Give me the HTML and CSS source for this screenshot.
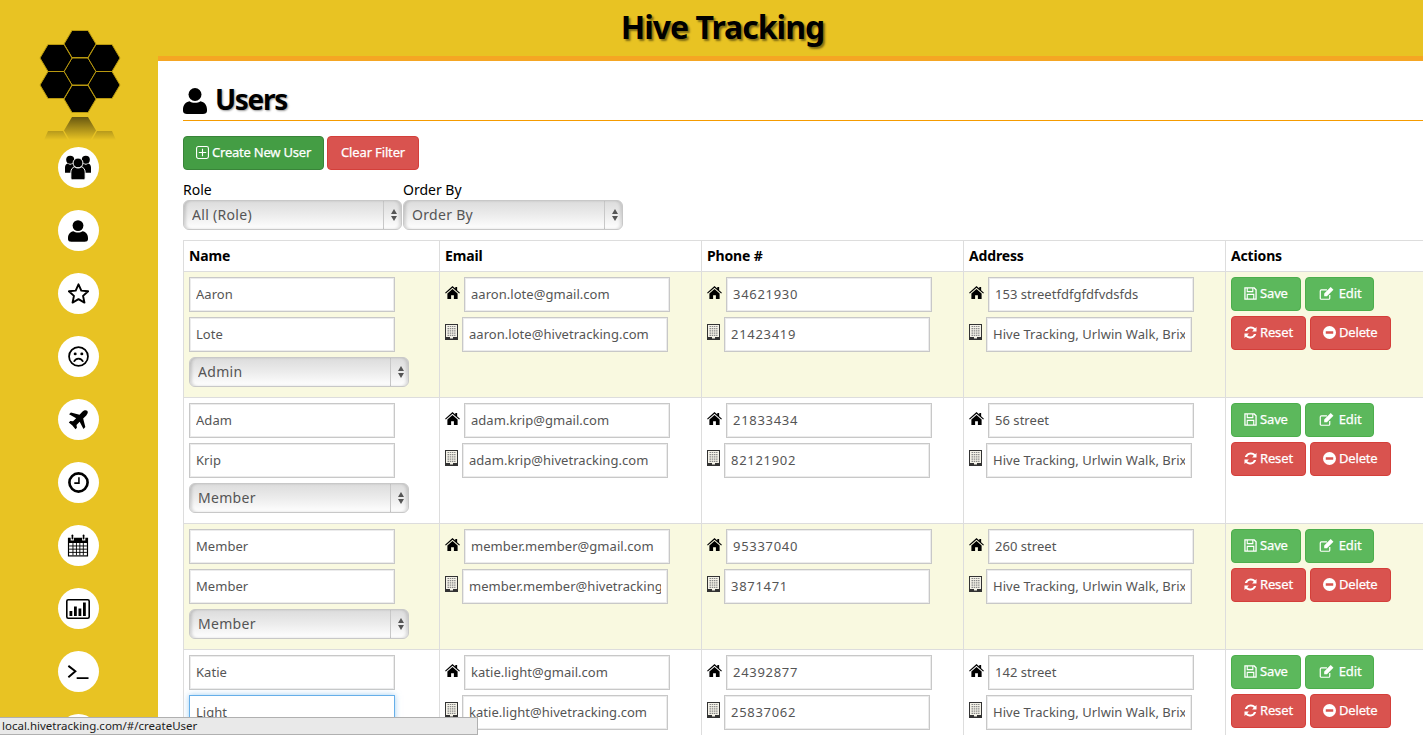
FILE: index.html
```html
<!DOCTYPE html>
<html lang="en">
<head>
  <meta charset="UTF-8" />
  <title>Hive Tracking</title>
  <link rel="stylesheet" href="styles.css">
</head>
<body>

  <svg class="defs" width="0" height="0">
    <symbol id="i-user" viewBox="0 0 24 26"><circle cx="12" cy="6.500" r="6.500"/><path d="M0 21.500c0-4.500 2.500-7.500 6.500-8.300 1.500 1 3.400 1.600 5.500 1.600s4-.6 5.500-1.600c4 .8 6.500 3.800 6.500 8.300V23c0 2-1.700 3-4 3H4c-2.300 0-4-1-4-3z"/></symbol>
    <symbol id="i-users" viewBox="0 0 40 38"><circle cx="8" cy="7" r="6.200"/><circle cx="32" cy="7" r="6.200"/><path d="M0 27v-8c0-3.500 2-5.500 4-6 1 1 2.500 1.600 4 1.600s3-.6 4-1.600c1.500.3 3 1 4 2.500-3 2-5 5-5 9v2.500z"/><path d="M40 27v-8c0-3.500-2-5.500-4-6-1 1-2.500 1.600-4 1.600s-3-.6-4-1.600c-1.500.3-3 1-4 2.500 3 2 5 5 5 9v2.500z"/><circle cx="20" cy="12" r="7.600" stroke="#fff" stroke-width="1.500"/><path d="M9 35v-9c0-4.500 3-7.500 6-8 1.400 1.200 3 1.800 5 1.800s3.600-.6 5-1.800c3 .5 6 3.500 6 8v9c0 2-1.500 3-3 3H12c-1.500 0-3-1-3-3z" stroke="#fff" stroke-width="1.500"/></symbol>
    <symbol id="i-star" viewBox="0 0 24 24"><path d="M12 1.500l3.200 7.200 7.800.8-5.800 5.200 1.600 7.700-6.800-4-6.800 4 1.600-7.700L1 9.500l7.800-.8z" fill="none" stroke="currentColor" stroke-width="2.200" stroke-linejoin="round"/></symbol>
    <symbol id="i-frown" viewBox="0 0 24 24"><circle cx="12" cy="12" r="10.800" fill="none" stroke="currentColor" stroke-width="2"/><circle cx="8.200" cy="9" r="1.700"/><circle cx="15.800" cy="9" r="1.700"/><path d="M6.800 18c1-2.500 3-3.700 5.200-3.700s4.200 1.200 5.200 3.700" fill="none" stroke="currentColor" stroke-width="2"/></symbol>
    <symbol id="i-plane" viewBox="0 0 24 24"><path d="M23 1c-1.400-1.400-3.800-.8-5.500.9l-3.700 3.700L3.500 3 1.300 5.200l8.500 4.600-3.800 3.800-3.300-.5L1 15l4.300 3.700L9 23l1.700-1.700-.5-3.300 3.800-3.800 4.600 8.500 2.200-2.200-2.600-10.300 3.700-3.700C23.600 4.800 24.400 2.400 23 1z"/></symbol>
    <symbol id="i-clock" viewBox="0 0 24 24"><circle cx="12" cy="12" r="10.400" fill="none" stroke="currentColor" stroke-width="3"/><path d="M11.600 6h1.800v7.600H7.200v-1.800h4.400z"/></symbol>
    <symbol id="i-calendar" viewBox="0 0 24 24"><path d="M1 3.500h3v3h3.500v-3h9v3H20v-3h3V24H1z"/><rect x="5" y="0" width="1.800" height="5.500" rx=".9"/><rect x="17.200" y="0" width="1.800" height="5.500" rx=".9"/><path d="M2.300 9.300h19.400v13.400H2.300z" fill="#fff"/><path d="M2.300 12.500h19.400M2.300 16h19.400M2.300 19.500h19.400M6.500 9.300v13.400M10.300 9.300v13.400M14 9.300v13.400M17.800 9.300v13.400" stroke="currentColor" stroke-width="1" fill="none"/></symbol>
    <symbol id="i-chart" viewBox="0 0 24 20"><rect x=".8" y=".8" width="22.400" height="18.400" rx="1.500" fill="none" stroke="currentColor" stroke-width="1.600"/><rect x="3.500" y="12" width="2.800" height="5"/><rect x="8" y="7.500" width="2.800" height="9.500"/><rect x="12.500" y="9.500" width="2.800" height="7.500"/><rect x="17" y="3.500" width="2.800" height="13.500"/></symbol>
    <symbol id="i-term" viewBox="0 0 24 16"><path d="M1 1l8 6.200-8 6.800" fill="none" stroke="currentColor" stroke-width="2.200"/><rect x="10.500" y="14" width="13.500" height="2"/></symbol>
    <symbol id="i-home" viewBox="0 0 16 14"><path d="M8 0l3 2.700V1h2v3.500L16 7.200l-.8.900L8 1.800.8 8.100 0 7.200z"/><path d="M8 3.300l5.500 4.800V14H9.500v-4h-3v4h-4V8.100z"/></symbol>
    <symbol id="i-building" viewBox="0 0 13 16"><rect x=".5" y=".5" width="12" height="15" fill="#f4f2e8" stroke="#333"/><path d="M2.500 2.500h8M2.500 4.700h8M2.500 6.900h8M2.500 9.100h8M2.500 11.300h8" stroke="#888" stroke-width="1.200" stroke-dasharray="1.500 .7"/><rect x="1" y="13" width="11" height="2.500" fill="#333"/><rect x="5" y="12.500" width="3" height="2" fill="#f4f2e8"/></symbol>
    <symbol id="i-plus" viewBox="0 0 14 14"><rect x=".6" y=".6" width="12.800" height="12.800" rx="2" fill="none" stroke="currentColor" stroke-width="1.200"/><path d="M7 3v8M3 7h8" stroke="currentColor" stroke-width="1.200"/></symbol>
    <symbol id="i-save" viewBox="0 0 14 14"><path d="M1 1h10l2 2v10H1z" fill="none" stroke="currentColor" stroke-width="1.400"/><path d="M3.500 1v4h6V1M3.500 13V8h7v5" fill="none" stroke="currentColor" stroke-width="1.200"/></symbol>
    <symbol id="i-edit" viewBox="0 0 15 14"><path d="M11 8.500V12a1.200 1.200 0 0 1-1.200 1.200H2A1.200 1.200 0 0 1 .8 12V4.200A1.200 1.200 0 0 1 2 3h6" fill="none" stroke="currentColor" stroke-width="1.300"/><path d="M5 7l7-7 3 3-7 7H5z"/></symbol>
    <symbol id="i-reset" viewBox="0 0 14 14"><path d="M13.500 1v4.800H8.700l1.800-1.800A4.300 4.300 0 0 0 3.300 5.500H.9A6.700 6.700 0 0 1 12 2.500z"/><path d="M.5 13V8.200h4.800l-1.800 1.800a4.300 4.300 0 0 0 7.200-1.500h2.400A6.700 6.700 0 0 1 2 11.500z"/></symbol>
    <symbol id="i-minus" viewBox="0 0 14 14"><path fill-rule="evenodd" d="M7 0a7 7 0 1 1 0 14A7 7 0 0 1 7 0zM3 5.700v2.600h8V5.700z"/></symbol>
  </svg>

  <aside class="sidebar">
    <!-- viewBox is page pixels, so the cells can be read off the screenshot -->
    <svg class="logo" viewBox="0 30 156 117" width="156" height="117">
      <defs>
        <polygon id="hex" points="-16,0 -8,-13.500 8,-13.500 16,0 8,13.500 -8,13.500" stroke="#b8980f" stroke-width="1"/>
        <linearGradient id="fade" gradientUnits="userSpaceOnUse" x1="0" y1="117" x2="0" y2="140">
          <stop offset="0" stop-color="#000" stop-opacity=".55"/>
          <stop offset="1" stop-color="#000" stop-opacity="0"/>
        </linearGradient>
      </defs>
      <use href="#hex" x="80" y="44"/>
      <use href="#hex" x="80" y="71.500"/>
      <use href="#hex" x="80" y="99"/>
      <use href="#hex" x="56" y="58"/>
      <use href="#hex" x="104" y="58"/>
      <use href="#hex" x="56" y="85"/>
      <use href="#hex" x="104" y="85"/>
      <path fill="url(#fade)" d="M72 117h16l8 13.500-8 13.500H72l-8-13.500zM48 131h15l5 9H44zM97 131h15l4 9H92z"/>
    </svg>
    <a class="nav-btn"><svg class="nav-icon ni-users"><use href="#i-users"/></svg></a>
    <a class="nav-btn"><svg class="nav-icon ni-user"><use href="#i-user"/></svg></a>
    <a class="nav-btn"><svg class="nav-icon"><use href="#i-star"/></svg></a>
    <a class="nav-btn"><svg class="nav-icon"><use href="#i-frown"/></svg></a>
    <a class="nav-btn"><svg class="nav-icon ni-plane"><use href="#i-plane"/></svg></a>
    <a class="nav-btn"><svg class="nav-icon"><use href="#i-clock"/></svg></a>
    <a class="nav-btn"><svg class="nav-icon ni-calendar"><use href="#i-calendar"/></svg></a>
    <a class="nav-btn"><svg class="nav-icon ni-chart"><use href="#i-chart"/></svg></a>
    <a class="nav-btn"><svg class="nav-icon ni-term"><use href="#i-term"/></svg></a>
    <a class="nav-btn"></a>
  </aside>

  <div class="page">
    <header class="topbar">
      <h1>Hive Tracking</h1>
    </header>

    <main class="content">
      <h2 class="page-title"><svg class="title-icon"><use href="#i-user"/></svg>Users</h2>

      <div class="toolbar">
        <button class="btn btn-create"><svg class="btn-icon"><use href="#i-plus"/></svg>Create New User</button>
        <button class="btn btn-red btn-clear">Clear Filter</button>
      </div>

      <div class="filters">
        <div class="filter">
          <label>Role</label>
          <div class="select-wrap"><select><option>All (Role)</option></select></div>
        </div>
        <div class="filter">
          <label>Order By</label>
          <div class="select-wrap"><select><option>Order By</option></select></div>
        </div>
      </div>

      <table class="users">
        <colgroup>
          <col class="col-name"><col class="col-email"><col class="col-phone"><col class="col-address"><col class="col-actions">
        </colgroup>
        <thead>
          <tr><th>Name</th><th>Email</th><th>Phone #</th><th>Address</th><th>Actions</th></tr>
        </thead>
        <tbody>
          <tr class="odd">
            <td>
              <input class="field" value="Aaron">
              <input class="field" value="Lote">
              <div class="select-wrap role"><select><option>Admin</option></select></div>
            </td>
            <td>
              <div class="line"><svg class="ico-home"><use href="#i-home"/></svg><input class="field" value="aaron.lote@gmail.com"></div>
              <div class="line"><svg class="ico-work"><use href="#i-building"/></svg><input class="field" value="aaron.lote@hivetracking.com"></div>
            </td>
            <td>
              <div class="line"><svg class="ico-home"><use href="#i-home"/></svg><input class="field num" value="34621930"></div>
              <div class="line"><svg class="ico-work"><use href="#i-building"/></svg><input class="field num" value="21423419"></div>
            </td>
            <td>
              <div class="line"><svg class="ico-home"><use href="#i-home"/></svg><input class="field" value="153 streetfdfgfdfvdsfds"></div>
              <div class="line"><svg class="ico-work"><use href="#i-building"/></svg><input class="field" value="Hive Tracking, Urlwin Walk, Brixton, London"></div>
            </td>
            <td>
              <div class="actions">
                <button class="btn btn-green"><svg class="btn-icon"><use href="#i-save"/></svg>Save</button>
                <button class="btn btn-green"><svg class="btn-icon ic-edit"><use href="#i-edit"/></svg>Edit</button>
              </div>
              <div class="actions">
                <button class="btn btn-red"><svg class="btn-icon"><use href="#i-reset"/></svg>Reset</button>
                <button class="btn btn-red"><svg class="btn-icon"><use href="#i-minus"/></svg>Delete</button>
              </div>
            </td>
          </tr>
          <tr>
            <td>
              <input class="field" value="Adam">
              <input class="field" value="Krip">
              <div class="select-wrap role"><select><option>Member</option></select></div>
            </td>
            <td>
              <div class="line"><svg class="ico-home"><use href="#i-home"/></svg><input class="field" value="adam.krip@gmail.com"></div>
              <div class="line"><svg class="ico-work"><use href="#i-building"/></svg><input class="field" value="adam.krip@hivetracking.com"></div>
            </td>
            <td>
              <div class="line"><svg class="ico-home"><use href="#i-home"/></svg><input class="field num" value="21833434"></div>
              <div class="line"><svg class="ico-work"><use href="#i-building"/></svg><input class="field num" value="82121902"></div>
            </td>
            <td>
              <div class="line"><svg class="ico-home"><use href="#i-home"/></svg><input class="field" value="56 street"></div>
              <div class="line"><svg class="ico-work"><use href="#i-building"/></svg><input class="field" value="Hive Tracking, Urlwin Walk, Brixton, London"></div>
            </td>
            <td>
              <div class="actions">
                <button class="btn btn-green"><svg class="btn-icon"><use href="#i-save"/></svg>Save</button>
                <button class="btn btn-green"><svg class="btn-icon ic-edit"><use href="#i-edit"/></svg>Edit</button>
              </div>
              <div class="actions">
                <button class="btn btn-red"><svg class="btn-icon"><use href="#i-reset"/></svg>Reset</button>
                <button class="btn btn-red"><svg class="btn-icon"><use href="#i-minus"/></svg>Delete</button>
              </div>
            </td>
          </tr>
          <tr class="odd">
            <td>
              <input class="field" value="Member">
              <input class="field" value="Member">
              <div class="select-wrap role"><select><option>Member</option></select></div>
            </td>
            <td>
              <div class="line"><svg class="ico-home"><use href="#i-home"/></svg><input class="field" value="member.member@gmail.com"></div>
              <div class="line"><svg class="ico-work"><use href="#i-building"/></svg><input class="field" value="member.member@hivetracking.com"></div>
            </td>
            <td>
              <div class="line"><svg class="ico-home"><use href="#i-home"/></svg><input class="field num" value="95337040"></div>
              <div class="line"><svg class="ico-work"><use href="#i-building"/></svg><input class="field num" value="3871471"></div>
            </td>
            <td>
              <div class="line"><svg class="ico-home"><use href="#i-home"/></svg><input class="field" value="260 street"></div>
              <div class="line"><svg class="ico-work"><use href="#i-building"/></svg><input class="field" value="Hive Tracking, Urlwin Walk, Brixton, London"></div>
            </td>
            <td>
              <div class="actions">
                <button class="btn btn-green"><svg class="btn-icon"><use href="#i-save"/></svg>Save</button>
                <button class="btn btn-green"><svg class="btn-icon ic-edit"><use href="#i-edit"/></svg>Edit</button>
              </div>
              <div class="actions">
                <button class="btn btn-red"><svg class="btn-icon"><use href="#i-reset"/></svg>Reset</button>
                <button class="btn btn-red"><svg class="btn-icon"><use href="#i-minus"/></svg>Delete</button>
              </div>
            </td>
          </tr>
          <tr>
            <td>
              <input class="field" value="Katie">
              <input class="field focused" value="Light">
            </td>
            <td>
              <div class="line"><svg class="ico-home"><use href="#i-home"/></svg><input class="field" value="katie.light@gmail.com"></div>
              <div class="line"><svg class="ico-work"><use href="#i-building"/></svg><input class="field" value="katie.light@hivetracking.com"></div>
            </td>
            <td>
              <div class="line"><svg class="ico-home"><use href="#i-home"/></svg><input class="field num" value="24392877"></div>
              <div class="line"><svg class="ico-work"><use href="#i-building"/></svg><input class="field num" value="25837062"></div>
            </td>
            <td>
              <div class="line"><svg class="ico-home"><use href="#i-home"/></svg><input class="field" value="142 street"></div>
              <div class="line"><svg class="ico-work"><use href="#i-building"/></svg><input class="field" value="Hive Tracking, Urlwin Walk, Brixton, London"></div>
            </td>
            <td>
              <div class="actions">
                <button class="btn btn-green"><svg class="btn-icon"><use href="#i-save"/></svg>Save</button>
                <button class="btn btn-green"><svg class="btn-icon ic-edit"><use href="#i-edit"/></svg>Edit</button>
              </div>
              <div class="actions">
                <button class="btn btn-red"><svg class="btn-icon"><use href="#i-reset"/></svg>Reset</button>
                <button class="btn btn-red"><svg class="btn-icon"><use href="#i-minus"/></svg>Delete</button>
              </div>
            </td>
          </tr>
        </tbody>
      </table>
    </main>
  </div>

  <div class="status">local.hivetracking.com/#/createUser</div>

</body>
</html>
```

FILE: styles.css
```css
* {
  box-sizing: border-box;
}

body {
  margin: 0;
  height: 735px;
  overflow: hidden;
  display: flex;
  background-color: #e8c323;
  font-family: "Noto Sans", Arial, sans-serif;
  font-size: 14px;
  color: #000;
}

.defs {
  position: absolute;
}

.sidebar {
  width: 158px;
  flex-shrink: 0;
  height: 735px;
  overflow: hidden;
  display: flex;
  flex-direction: column;
  align-items: center;
  padding: 30px 2px 0 0;
}

.logo {
  flex-shrink: 0;
}

.nav-btn {
  flex-shrink: 0;
  width: 41px;
  height: 41px;
  margin-bottom: 22px;
  border-radius: 50%;
  background-color: #fff;
  color: #000;
  display: flex;
  align-items: center;
  justify-content: center;
}

.nav-icon {
  width: 21px;
  height: 21px;
  fill: currentColor;
}

.ni-users { width: 26px; height: 25px; }
.ni-user { width: 20px; height: 22px; }
.ni-plane { width: 20px; height: 20px; }
.ni-calendar { width: 22px; height: 23px; }
.ni-chart { width: 24px; height: 20px; }
.ni-term { width: 22px; height: 14px; }

.page {
  flex: 1;
  min-width: 0;
  height: 735px;
  display: flex;
  flex-direction: column;
}

.topbar {
  height: 56px;
  flex-shrink: 0;
  text-align: center;
  padding-right: 136px;
}

.topbar h1 {
  margin: 0;
  font-size: 32px;
  letter-spacing: -1px;
  line-height: 54px;
  font-weight: bold;
  text-shadow: 2px 2px 2px rgba(0, 0, 0, 0.45);
}

.content {
  flex: 1;
  min-height: 0;
  overflow: hidden;
  background-color: #fff;
  border-top: 5px solid #f5a623;
  padding: 18px 0 0 25px;
}

.page-title {
  margin: 0 0 15px;
  height: 42px;
  border-bottom: 1px solid #f59b00;
  font-size: 28px;
  letter-spacing: -1.3px;
  line-height: 40px;
  font-weight: bold;
  text-shadow: 1px 1px 2px rgba(0, 0, 0, 0.4);
}

.title-icon {
  width: 24px;
  height: 26px;
  margin-right: 8px;
  vertical-align: -4px;
  fill: #000;
}

.toolbar {
  display: flex;
  gap: 3px;
  margin-bottom: 11px;
}

.btn {
  height: 34px;
  padding: 0 12px 2px;
  border: 1px solid transparent;
  border-radius: 4px;
  color: #fff;
  font-family: inherit;
  font-size: 13px;
  letter-spacing: -0.15px;
  -webkit-text-stroke: 0.25px #fff;
  cursor: pointer;
  white-space: nowrap;
}

.btn-clear {
  padding: 0 13px 2px;
}

.btn-create {
  background-color: #449d44;
  border-color: #398439;
  letter-spacing: -0.22px;
}

.btn-green {
  background-color: #5cb85c;
  border-color: #4cae4c;
}

.btn-red {
  background-color: #d9534f;
  border-color: #d43f3a;
}

.btn-icon {
  width: 13px;
  height: 13px;
  margin-right: 3px;
  vertical-align: -2px;
  fill: currentColor;
}

.btn-icon.ic-edit {
  width: 15px;
  margin: 0 5px 0 1px;
}

.filters {
  display: flex;
  gap: 1px;
  margin-bottom: 10px;
}

.filter {
  width: 220px;
}

.filter:first-child {
  width: 219px;
}

.filter label {
  display: block;
  line-height: 18px;
  height: 19px;
  font-size: 14px;
}

.select-wrap {
  position: relative;
  height: 30px;
}

.select-wrap select {
  width: 100%;
  height: 100%;
  appearance: none;
  -webkit-appearance: none;
  padding: 0 8px 2px;
  border: 1px solid #c8c8c8;
  border-radius: 6px;
  background-color: #ececec;
  background-image:
    linear-gradient(#c8c8c8, #c8c8c8),
    linear-gradient(to bottom, #dcdcdc, #ececec 50%, #fbfbfb 90%);
  background-repeat: no-repeat;
  background-size: 1px 100%, 100% 100%;
  background-position: right 17px top, left top;
  box-shadow: inset 3px 0 3px -1px rgba(0, 0, 0, 0.15), inset -3px 0 3px -1px rgba(0, 0, 0, 0.12);
  color: #555;
  font-family: inherit;
  font-size: 14px;
  letter-spacing: 0.3px;
}

/* the up and down arrows on the right of the select */
.select-wrap::before,
.select-wrap::after {
  content: "";
  position: absolute;
  right: 5px;
  border-left: 3.5px solid transparent;
  border-right: 3.5px solid transparent;
}

.select-wrap::before {
  top: 9px;
  border-bottom: 5px solid #555;
}

.select-wrap::after {
  top: 16px;
  border-top: 5px solid #555;
}

.users {
  width: 1240px;
  table-layout: fixed;
  border-collapse: collapse;
}

.col-name { width: 256px; }
.col-email { width: 262px; }
.col-phone { width: 262px; }
.col-address { width: 262px; }
.col-actions { width: 198px; }

.users th, .users td {
  border: 1px solid #ddd;
  text-align: left;
  vertical-align: top;
  padding: 5px;
}

.users th {
  height: 31px;
  font-size: 14px;
  letter-spacing: -0.15px;
  font-weight: bold;
}

.users td {
  height: 126px;
}

.users tr.odd td {
  background-color: #f9f9e0;
}

.field {
  display: block;
  width: 206px;
  height: 35px;
  margin-bottom: 5px;
  padding: 0 6px 2px;
  border: 1px solid #c8c8c8;
  box-shadow: inset 0 0 0 1px #ececec;
  background-color: #fff;
  color: #555;
  font-family: inherit;
  font-size: 13px;
  letter-spacing: 0.04px;
}

.field.num {
  letter-spacing: 0.7px;
}

.field.focused {
  border-color: #66afe9;
  box-shadow: 0 0 6px rgba(102, 175, 233, 0.6);
}

.role {
  width: 220px;
}

.line {
  display: flex;
  align-items: flex-start;
}

.ico-home {
  width: 15px;
  height: 13px;
  margin: 9px 4px 0 0;
  flex-shrink: 0;
  fill: #000;
}

.ico-work {
  width: 13px;
  height: 16px;
  margin: 7px 4px 0 0;
  flex-shrink: 0;
}

.actions {
  display: flex;
  gap: 4px;
  margin-bottom: 5px;
}

.status {
  position: fixed;
  left: 0;
  bottom: 0;
  width: 478px;
  height: 18px;
  padding: 0 2px;
  border: 1px solid #b0b0b0;
  border-left: none;
  background-color: #e9e9e9;
  color: #222;
  font-size: 11.5px;
  line-height: 16px;
}
```
